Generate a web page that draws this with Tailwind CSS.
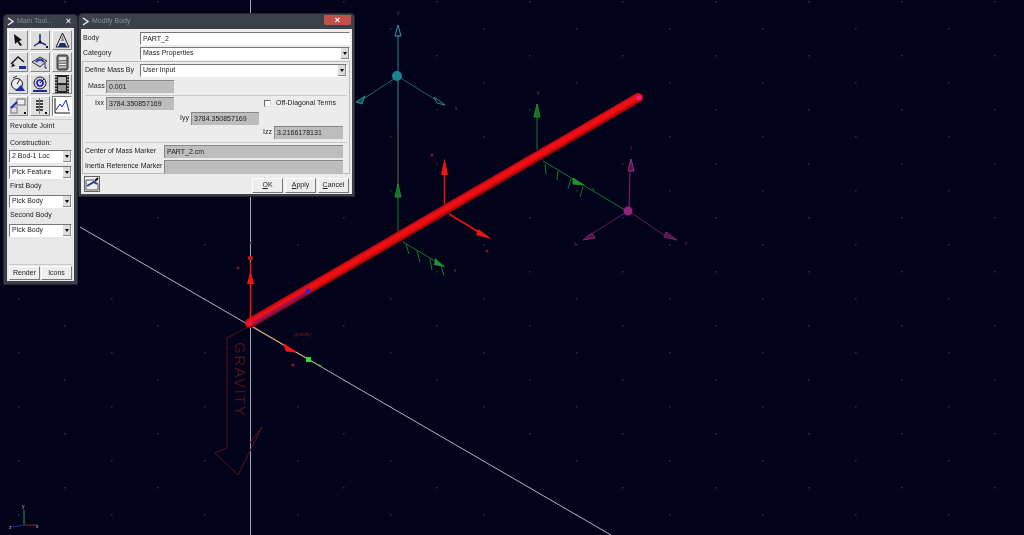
<!DOCTYPE html>
<html lang="en">
<head>
    <meta charset="UTF-8">
    <title>Modify Body</title>
    <script src="https://cdn.jsdelivr.net/npm/@tailwindcss/browser@4"></script>
</head>
<body class="relative w-[1024px] h-[535px] overflow-hidden bg-[#02021a] font-['Liberation_Sans',sans-serif] text-[7px] text-[#222]">

    <!-- 3d view -->
    <svg class="absolute inset-0 blur-[0.5px]" width="1024" height="535" viewBox="0 0 1024 535" fill="none">
        <defs>
            <pattern id="grid" width="93" height="54" patternUnits="userSpaceOnUse">
                <rect x="18" y="28" width="1.5" height="1.5" fill="#2c2c4c"/>
                <rect x="64" y="1" width="1.5" height="1.5" fill="#2c2c4c"/>
            </pattern>
            <linearGradient id="rod" gradientUnits="userSpaceOnUse" x1="441.500" y1="206.700" x2="446.500" y2="215.300">
                <stop offset="0" stop-color="#b80a10"/>
                <stop offset="0.25" stop-color="#f21015"/>
                <stop offset="0.6" stop-color="#e80c10"/>
                <stop offset="1" stop-color="#700408"/>
            </linearGradient>
        </defs>
        <rect width="1024" height="535" fill="url(#grid)"/>

        <line x1="250.500" y1="0" x2="250.500" y2="535" stroke="#a4a4aa"/>
        <line x1="80" y1="227" x2="611" y2="535" stroke="#b4b4ba"/>
        <line x1="250" y1="325" x2="308" y2="359" stroke="#e0a050"/>
        <line x1="308" y1="359" x2="322" y2="367" stroke="#8fae60"/>

        <!-- gravity arrow -->
        <path d="M227 338 L250 326 M227 338 L227 448 L215 453 L238 475 L262 427 L250 443" stroke="#5a1418"/>
        <text transform="translate(235 342) rotate(90)" fill="#4e1216" font-size="15" letter-spacing="1.500" font-family="Liberation Sans">GRAVITY</text>

        <!-- teal triad -->
        <line x1="398" y1="35" x2="398" y2="76" stroke="#2c7c8c"/>
        <line x1="398" y1="76" x2="398" y2="130" stroke="#547c88"/>
        <line x1="398" y1="130" x2="398" y2="190" stroke="#5a6a60"/>
        <path d="M398 25 L395 36 L401 36 Z" stroke="#2fa0a8"/>
        <line x1="397" y1="77" x2="360" y2="101" stroke="#1f6470"/>
        <path d="M356 102 L365 96 L362 104 Z" stroke="#2a8a90" fill="#15505a"/>
        <line x1="399" y1="77" x2="436" y2="100" stroke="#1f6470"/>
        <path d="M445 105 L434 97 L437 103 Z" stroke="#2a8a90"/>
        <circle cx="397" cy="76" r="5" fill="#1c8492"/>
        <text x="397" y="14" fill="#2a6a70" font-size="5">y</text>
        <text x="455" y="110" fill="#2a6a70" font-size="5">x</text>
        <text x="350" y="104" fill="#1f6470" font-size="5">z</text>

        <!-- green markers -->
        <line x1="398" y1="190" x2="398" y2="232" stroke="#187a2a"/>
        <path d="M398 184 L395 197 L401 197 Z" stroke="#1c9028" fill="#157020"/>
        <line x1="403" y1="242" x2="445" y2="267" stroke="#187a2a"/>
        <path d="M406 244 L409 254 M417 251 L420 262 M430 259 L432 270 M441 265 L444 276" stroke="#187a2a"/>
        <path d="M445 267 L435 258 L434 265 Z" fill="#209030"/>
        <text x="454" y="272" fill="#1e7a30" font-size="5">x</text>

        <line x1="537" y1="105" x2="537" y2="150" stroke="#187a2a"/>
        <path d="M537 104 L534 117 L540 117 Z" stroke="#1c9028" fill="#157020"/>
        <text x="537" y="94" fill="#1e7a30" font-size="5">y</text>
        <line x1="543" y1="161" x2="625" y2="210" stroke="#187a2a"/>
        <path d="M545 164 L546 174 M558 171 L557 180 M571 179 L568 189 M583 187 L580 197" stroke="#187a2a"/>
        <path d="M584 185 L573 178 L573 184 Z" fill="#209030" stroke="#209030"/>
        <text x="592" y="191" fill="#1e7a30" font-size="5">x</text>

        <!-- magenta triad -->
        <line x1="630" y1="170" x2="629" y2="211" stroke="#8a2470"/>
        <path d="M631 159 L628 171 L634 171 Z" stroke="#a02a80" fill="#501644"/>
        <line x1="628" y1="211" x2="590" y2="235" stroke="#6e1a5a"/>
        <path d="M583 240 L592 233 L595 238 Z" stroke="#8a2470" fill="#501644"/>
        <line x1="629" y1="211" x2="665" y2="236" stroke="#6e1a5a"/>
        <path d="M677 240 L666 232 L664 237 Z" stroke="#8a2470" fill="#501644"/>
        <circle cx="628" cy="211" r="4.500" fill="#90247a"/>
        <text x="630" y="149" fill="#801f68" font-size="5">y</text>
        <text x="574" y="246" fill="#801f68" font-size="5">z</text>
        <text x="685" y="245" fill="#801f68" font-size="5">x</text>

        <!-- cm triad -->
        <line x1="444.500" y1="170" x2="444.500" y2="207" stroke="#ee1111" stroke-width="1.500"/>
        <path d="M444.500 158 L441 175 L448 175 Z" fill="#f01414"/>
        <line x1="449" y1="214" x2="482" y2="234" stroke="#ee1111" stroke-width="1.500"/>
        <path d="M492 239 L478 229 L476 235 Z" fill="#f01414"/>
        <circle cx="432" cy="155" r="1.500" fill="#7a1a20"/>
        <circle cx="487" cy="251" r="1.500" fill="#7a1a20"/>

        <!-- part_2 link -->
        <line x1="250" y1="323" x2="638" y2="98" stroke="url(#rod)" stroke-width="10" stroke-linecap="round"/>
        <line x1="254" y1="323" x2="308" y2="292" stroke="#5018a0" stroke-width="3" opacity="0.5"/>
        <circle cx="308" cy="291" r="2.500" fill="#3a20d0"/>
        <circle cx="639" cy="98" r="2.500" fill="#f02078"/>

        <!-- origin markers -->
        <line x1="250.500" y1="262" x2="250.500" y2="323" stroke="#f01414" stroke-width="1.500"/>
        <path d="M250.500 271 L247 284 L254 284 Z" fill="#f01414"/>
        <circle cx="250.500" cy="258" r="2.500" fill="#c01820"/>
        <circle cx="251" cy="243" r="1" fill="#6a1a20"/>
        <circle cx="238" cy="268" r="1.500" fill="#7a1a20"/>
        <circle cx="250" cy="323" r="2.500" fill="#e81440"/>
        <path d="M296 352 L284 344 L286 351 Z" fill="#f01414" stroke="#f01414"/>
        <rect x="306" y="357" width="5" height="5" fill="#22e040"/>
        <text x="319" y="367" fill="#2a9a40" font-size="6">x</text>
        <text x="294" y="336" fill="#7a1a20" font-size="6">gravity</text>
        <circle cx="293" cy="365" r="1.500" fill="#8a1a20"/>

        <!-- global triad -->
        <line x1="24" y1="510" x2="24" y2="525" stroke="#20a040"/>
        <line x1="24" y1="525" x2="37" y2="525" stroke="#902030"/>
        <line x1="24" y1="525" x2="13" y2="527" stroke="#2030a0"/>
        <text x="22" y="508" fill="#c0c0c8" font-size="5">y</text>
        <text x="36" y="528" fill="#c0c0c8" font-size="5">x</text>
        <text x="9" y="529" fill="#c0c0c8" font-size="5">z</text>
    </svg>

    <!-- main toolbox window -->
    <div class="absolute left-[3px] top-[14px] w-[75px] h-[271px] flex flex-col rounded-t-[4px] border border-[#23262c] bg-[#3a3f49] px-[3px] pb-[3px] blur-[0.4px]">
        <div class="h-[13px] shrink-0 flex items-center gap-[2px] text-[#8b9098]">
            <svg width="8" height="9" viewBox="0 0 8 9" fill="none"><path d="M1 1 L6 4.500 L1 8" stroke="#e8e8e8" stroke-width="1.500"/></svg>
            <span class="flex-1 truncate text-[7px]">Main Tool...</span>
            <span class="text-[9px] leading-none font-bold text-[#e8e8e8] pr-[3px]">×</span>
        </div>
        <div class="flex-1 flex flex-col bg-[#e8e8e8] px-[2px]">
            <div class="-ml-[1px] grid grid-cols-[20px_20px_20px] gap-[2px] pt-[2px] pb-[3px]">
                <button class="w-[20px] h-[20px] flex items-center justify-center bg-[#dedede] border border-t-white border-l-white border-r-[#888] border-b-[#888]">
                    <svg width="14" height="14" viewBox="0 0 14 14"><path d="M3 1 L11 7 L8 8 L11 12 L9 13 L6.500 9 L4 11 Z" fill="#111"/></svg>
                </button>
                <button class="w-[20px] h-[20px] flex items-center justify-center bg-[#dedede] border border-t-white border-l-white border-r-[#888] border-b-[#888]">
                    <svg width="17" height="17" viewBox="0 0 17 17" fill="none"><path d="M8 2 V10 L2 14 M8 10 L14 13" stroke="#1c2a90" stroke-width="1.500"/><circle cx="8" cy="10" r="1.500" fill="#111"/><rect x="14" y="14" width="2" height="2" fill="#111"/></svg>
                </button>
                <button class="w-[20px] h-[20px] flex items-center justify-center bg-[#dedede] border border-t-white border-l-white border-r-[#888] border-b-[#888]">
                    <svg width="17" height="17" viewBox="0 0 17 17" fill="none"><path d="M8.500 1 L2 15 H15 Z" stroke="#222"/><path d="M6 11 H11 L13 15 H4 Z" fill="#1c2a70"/><path d="M8.500 3 L7 9 H10 Z" fill="#888"/></svg>
                </button>
                <button class="w-[20px] h-[20px] flex items-center justify-center bg-[#dedede] border border-t-white border-l-white border-r-[#888] border-b-[#888]">
                    <svg width="17" height="17" viewBox="0 0 17 17" fill="none"><path d="M1 10 L8 3 L14 8" stroke="#111" stroke-width="1.300"/><path d="M1 13 L3 9 L5 12 Z" fill="#111"/><rect x="9" y="12" width="7" height="3" fill="#1c2ab0"/></svg>
                </button>
                <button class="w-[20px] h-[20px] flex items-center justify-center bg-[#dedede] border border-t-white border-l-white border-r-[#888] border-b-[#888]">
                    <svg width="18" height="17" viewBox="0 0 18 17" fill="none"><path d="M1 8 L9 3 L16 7 L9 13 Z" fill="#ccc" stroke="#333"/><path d="M5 8 Q9 3 13 8" stroke="#1c2ab0" stroke-width="2"/><path d="M14 9 V14 H16" stroke="#1c2a90"/></svg>
                </button>
                <button class="w-[20px] h-[20px] flex items-center justify-center bg-[#dedede] border border-t-white border-l-white border-r-[#888] border-b-[#888]">
                    <svg width="15" height="17" viewBox="0 0 15 17" fill="none"><rect x="2" y="1" width="11" height="15" rx="2" fill="#777" stroke="#333"/><rect x="4" y="3" width="7" height="3" fill="#ddd"/><path d="M4 8 H11 M4 10.500 H11 M4 13 H11" stroke="#eee"/></svg>
                </button>
                <button class="w-[20px] h-[20px] flex items-center justify-center bg-[#dedede] border border-t-white border-l-white border-r-[#888] border-b-[#888]">
                    <svg width="18" height="18" viewBox="0 0 18 18" fill="none"><circle cx="8" cy="9" r="5.500" stroke="#222" fill="#eee"/><path d="M4 3 L8 1 M8 9 L11 4" stroke="#222"/><path d="M6 16 L12 10 L16 16 Z" fill="#1c2ab0"/></svg>
                </button>
                <button class="w-[20px] h-[20px] flex items-center justify-center bg-[#dedede] border border-t-white border-l-white border-r-[#888] border-b-[#888]">
                    <svg width="18" height="18" viewBox="0 0 18 18" fill="none"><circle cx="9" cy="8" r="6" stroke="#222" fill="#ccd"/><circle cx="9" cy="8" r="3" stroke="#1c2ab0" stroke-width="1.500"/><path d="M2 16 H16" stroke="#1c2a90" stroke-width="2"/><path d="M9 8 L13 4" stroke="#222"/></svg>
                </button>
                <button class="w-[20px] h-[20px] flex items-center justify-center bg-[#dedede] border border-t-white border-l-white border-r-[#888] border-b-[#888]">
                    <svg width="16" height="18" viewBox="0 0 16 18"><rect x="1" y="0" width="14" height="18" fill="#222"/><rect x="4" y="2" width="8" height="6" fill="#bbb"/><rect x="4" y="10" width="8" height="6" fill="#999"/><path d="M2 1 V17 M14 1 V17" stroke="#eee" stroke-width="1.200" stroke-dasharray="1.500 1.500"/></svg>
                </button>
                <button class="w-[20px] h-[20px] flex items-center justify-center bg-[#dedede] border border-t-white border-l-white border-r-[#888] border-b-[#888]">
                    <svg width="18" height="17" viewBox="0 0 18 17" fill="none"><rect x="8" y="1" width="8" height="6" stroke="#666" fill="#eee"/><rect x="2" y="9" width="6" height="6" stroke="#777"/><path d="M2 10 L8 4" stroke="#1c2ab0" stroke-width="2"/><rect x="15" y="14" width="2" height="2" fill="#111"/></svg>
                </button>
                <button class="w-[20px] h-[20px] flex items-center justify-center bg-[#dedede] border border-t-white border-l-white border-r-[#888] border-b-[#888]">
                    <svg width="14" height="18" viewBox="0 0 14 18" fill="none"><path d="M3 4 H10 M3 7 H10 M3 10 H10 M3 13 H10" stroke="#444" stroke-width="2"/><path d="M6.500 1 V17" stroke="#777"/><rect x="12" y="15" width="2" height="2" fill="#111"/></svg>
                </button>
                <button class="w-[20px] h-[20px] flex items-center justify-center bg-white border border-t-[#777] border-l-[#777] border-r-white border-b-white">
                    <svg width="18" height="18" viewBox="0 0 18 18" fill="none"><path d="M2 1 V16 H17" stroke="#111"/><path d="M3 13 L7 7 L9 10 L13 3 L16 14" stroke="#1c2ab0"/></svg>
                </button>
            </div>
            <div class="border-t border-[#ccc] h-[14px] flex items-center px-[1px]">Revolute Joint</div>
            <div class="border-t border-[#ccc] pt-[4px] flex flex-col">
                <span class="h-[9px] leading-[9px] px-[1px] mb-[3px]">Construction:</span>
                <div class="h-[13px] mb-[3px] flex items-center bg-white border border-t-[#777] border-l-[#777] border-r-white border-b-white pl-[2px]"><span class="flex-1 whitespace-nowrap">2 Bod-1 Loc</span><span class="w-[8px] h-[11px] bg-[#ddd] border-r border-b border-[#888] flex items-center justify-center"><span class="border-x-[2px] border-t-[3px] border-x-transparent border-t-black"></span></span></div>
                <div class="h-[13px] flex items-center bg-white border border-t-[#777] border-l-[#777] border-r-white border-b-white pl-[2px]"><span class="flex-1 whitespace-nowrap">Pick Feature</span><span class="w-[8px] h-[11px] bg-[#ddd] border-r border-b border-[#888] flex items-center justify-center"><span class="border-x-[2px] border-t-[3px] border-x-transparent border-t-black"></span></span></div>
                <span class="h-[13px] leading-[13px] px-[1px] mb-[3px]">First Body</span>
                <div class="h-[13px] flex items-center bg-white border border-t-[#777] border-l-[#777] border-r-white border-b-white pl-[2px]"><span class="flex-1 whitespace-nowrap">Pick Body</span><span class="w-[8px] h-[11px] bg-[#ddd] border-r border-b border-[#888] flex items-center justify-center"><span class="border-x-[2px] border-t-[3px] border-x-transparent border-t-black"></span></span></div>
                <span class="h-[13px] leading-[13px] px-[1px] mb-[3px]">Second Body</span>
                <div class="h-[13px] flex items-center bg-white border border-t-[#777] border-l-[#777] border-r-white border-b-white pl-[2px]"><span class="flex-1 whitespace-nowrap">Pick Body</span><span class="w-[8px] h-[11px] bg-[#ddd] border-r border-b border-[#888] flex items-center justify-center"><span class="border-x-[2px] border-t-[3px] border-x-transparent border-t-black"></span></span></div>
            </div>
            <div class="mt-auto border-t border-[#ccc] pt-[1px] pb-[1px] flex gap-[1px]">
                <button class="flex-1 h-[14px] bg-[#eee] border border-t-white border-l-white border-r-[#777] border-b-[#777]">Render</button>
                <button class="flex-1 h-[14px] bg-[#eee] border border-t-white border-l-white border-r-[#777] border-b-[#777]">Icons</button>
            </div>
        </div>
    </div>

    <!-- modify body dialog -->
    <div class="absolute left-[78px] top-[13px] w-[277px] h-[184px] flex flex-col rounded-t-[4px] border border-[#23262c] bg-[#3b4049] px-[2px] pb-[2px] blur-[0.4px]">
        <div class="h-[15px] shrink-0 flex items-center gap-[2px] pl-[1px] text-[#8d929a]">
            <svg width="8" height="9" viewBox="0 0 8 9" fill="none"><path d="M1 1 L6 4.500 L1 8" stroke="#e8e8e8" stroke-width="1.500"/></svg>
            <span class="flex-1 text-[7px]">Modify Body</span>
            <span class="w-[27px] h-[10px] -mt-[3px] mr-[1px] rounded-b-[2px] bg-[#c0504a] text-white text-[9px] leading-[10px] font-bold text-center">×</span>
        </div>
        <div class="flex-1 flex flex-col bg-[#ececec] pt-[1px]">
            <div class="flex items-center h-[15px] pt-[2px] pl-[2px] pr-[2px]">
                <span class="w-[57px]">Body</span>
                <div class="flex-1 h-[13px] bg-white border border-t-[#777] border-l-[#777] border-r-white border-b-white pl-[2px] leading-[11px]">PART_2</div>
            </div>
            <div class="flex items-center h-[15px] pt-[2px] pl-[2px] pr-[2px]">
                <span class="w-[57px]">Category</span>
                <div class="flex-1 h-[13px] flex items-center bg-white border border-t-[#777] border-l-[#777] border-r-white border-b-white pl-[2px]"><span class="flex-1">Mass Properties</span><span class="w-[8px] h-[11px] bg-[#ddd] border-r border-b border-[#888] flex items-center justify-center"><span class="border-x-[2px] border-t-[3px] border-x-transparent border-t-black"></span></span></div>
            </div>
            <div class="mt-[1px] ml-[1px] mr-[2px] h-[113px] flex flex-col border border-[#bbb] px-[2px] pt-[2px]">
                <div class="flex items-center h-[13px]">
                    <span class="w-[55px] whitespace-nowrap">Define Mass By</span>
                    <div class="flex-1 h-[13px] flex items-center bg-white border border-t-[#777] border-l-[#777] border-r-white border-b-white pl-[2px]"><span class="flex-1">User Input</span><span class="w-[8px] h-[11px] bg-[#ddd] border-r border-b border-[#888] flex items-center justify-center"><span class="border-x-[2px] border-t-[3px] border-x-transparent border-t-black"></span></span></div>
                </div>
                <div class="flex items-center justify-start h-[13px] mt-[3px] pl-[3px] gap-[2px]">
                    <span class="w-[16px] text-right">Mass</span>
                    <div class="w-[68px] h-[13px] bg-[#bdbdbd] border-t border-l border-[#888] pl-[2px] leading-[12px]">0.001</div>
                </div>
                <div class="mt-[2px] border-t border-[#c8c8c8]"></div>
                <div class="flex items-center h-[13px] mt-[1px] pl-[3px] gap-[2px]">
                    <span class="w-[16px] text-right">Ixx</span>
                    <div class="w-[68px] h-[13px] bg-[#bdbdbd] border-t border-l border-[#888] pl-[2px] leading-[12px]">3784.350857169</div>
                    <span class="ml-[88px] w-[7px] h-[7px] bg-white border border-t-[#666] border-l-[#666] border-r-[#ddd] border-b-[#ddd]"></span>
                    <span class="ml-[3px] whitespace-nowrap">Off-Diagonal Terms</span>
                </div>
                <div class="flex items-center h-[13px] mt-[2px] pl-[88px] gap-[2px]">
                    <span class="w-[16px] text-right">Iyy</span>
                    <div class="w-[68px] h-[13px] bg-[#bdbdbd] border-t border-l border-[#888] pl-[2px] leading-[12px]">3784.350857169</div>
                </div>
                <div class="flex items-center justify-end h-[13px] mt-[1px] pr-[4px] gap-[2px]">
                    <span>Izz</span>
                    <div class="w-[69px] h-[13px] bg-[#bdbdbd] border-t border-l border-[#888] pl-[2px] leading-[12px]">3.2166178131</div>
                </div>
                <div class="mt-[3px] border-t border-[#c8c8c8]"></div>
                <div class="flex items-center h-[13px] mt-[2px] pr-[4px]">
                    <span class="w-[79px] whitespace-nowrap">Center of Mass Marker</span>
                    <div class="flex-1 h-[13px] bg-[#bdbdbd] border-t border-l border-[#888] pl-[2px] leading-[12px]">PART_2.cm</div>
                </div>
                <div class="flex items-center h-[13px] mt-[2px] pr-[4px]">
                    <span class="w-[79px] whitespace-nowrap">Inertia Reference Marker</span>
                    <div class="flex-1 h-[13px] bg-[#bdbdbd] border-t border-l border-[#888]"></div>
                </div>
            </div>
            <div class="flex-1 flex items-end justify-end pb-[1px] pl-[3px] pr-[3px] gap-[2px]">
                <button class="mr-auto mb-[1px] w-[16px] h-[16px] flex items-center justify-center bg-[#eee] border border-[#666]">
                    <svg width="14" height="14" viewBox="0 0 14 14" fill="none"><path d="M1 3 H9 M1 3 V13 H13 V6" stroke="#555"/><path d="M2 9 L9 5 L12 7" stroke="#2a3aa0" stroke-width="2"/><path d="M10 4 L13 1" stroke="#111" stroke-width="2"/></svg>
                </button>
                <button class="w-[31px] h-[15px] bg-[#eee] border border-t-white border-l-white border-r-[#777] border-b-[#777]"><span class="underline">O</span>K</button>
                <button class="w-[31px] h-[15px] bg-[#eee] border border-t-white border-l-white border-r-[#777] border-b-[#777]"><span class="underline">A</span>pply</button>
                <button class="w-[31px] h-[15px] bg-[#eee] border border-t-white border-l-white border-r-[#777] border-b-[#777]"><span class="underline">C</span>ancel</button>
            </div>
        </div>
    </div>
</body>
</html>
